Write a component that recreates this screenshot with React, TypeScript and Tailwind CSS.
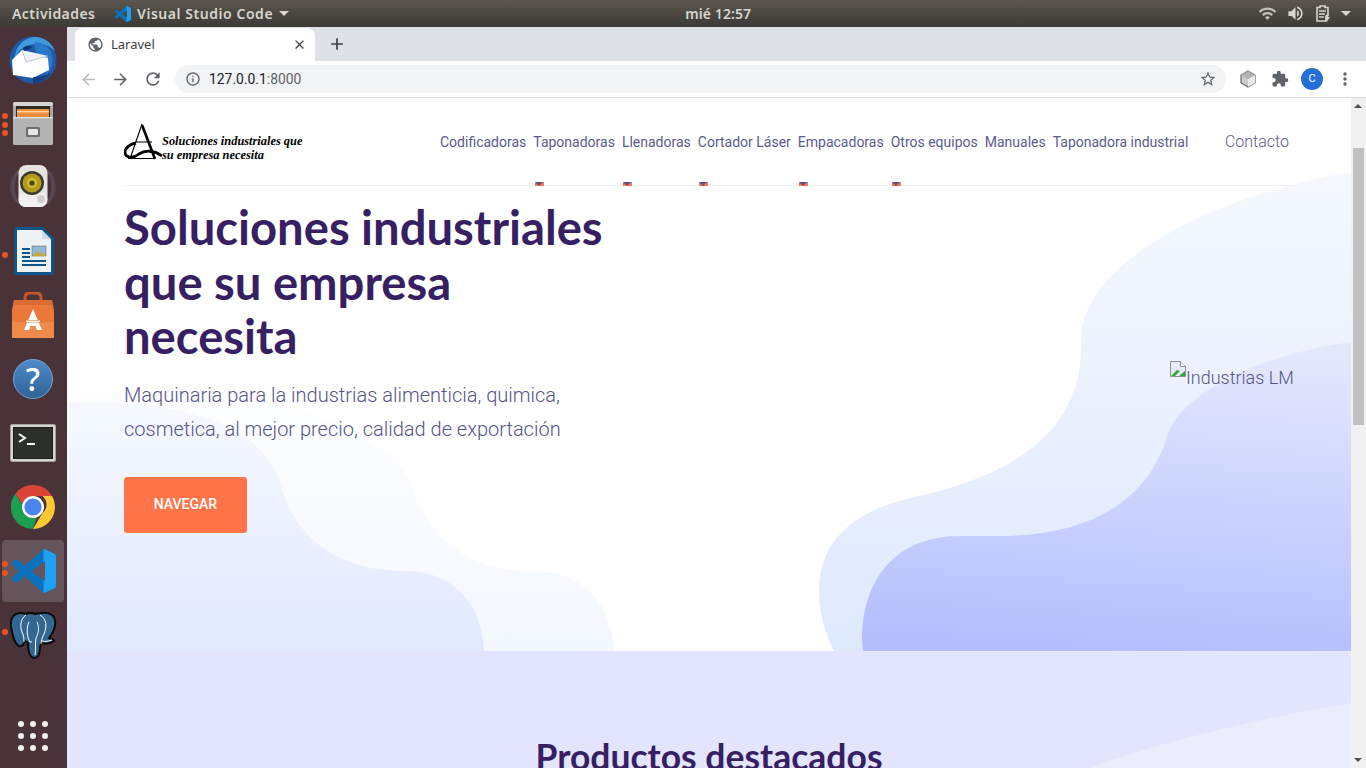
import React from "react";
import { MdArrowBack, MdArrowForward, MdRefresh, MdInfoOutline, MdStarBorder, MdExtension, MdMoreVert, MdClose, MdAdd, MdPublic, MdWifi, MdVolumeUp } from "react-icons/md";

const Dots = ({ ys }: { ys: number[] }) => (
  <>
    {ys.map((y) => (
      <span key={y} className="absolute left-[2px] h-[6px] w-[6px] rounded-full bg-[#e95420]" style={{ top: y }} />
    ))}
  </>
);

const Thunderbird = () => (
  <svg width="48" height="48" viewBox="0 0 48 48" className="-ml-[2px]">
    <circle cx="24" cy="24" r="23.5" fill="#1f5aa8" />
    <path d="M6 24C5 12 14 2 26 1c9 0 17 6 20 14-5-5-12-8-20-7C15 9 8 15 6 24z" fill="#3d9be0" />
    <path d="M26 6c8 0 15 5 17 13 2 8-1 15-6 20 1-7 0-14-6-18-4-3-6-9-5-15z" fill="#2a78c8" />
    <path d="M3 24l10-10 26 8 1 12-16 8-20-3z" fill="#fff" />
    <path d="M13 14l4 12 22-6" fill="#eef1f5" stroke="#b8bec8" strokeWidth="0.8" />
    <path d="M14 12c3-3 7-3 9 0l-8 3z" fill="#12386f" />
    <path d="M24 47c8 0 14-4 18-10-6 3-12 4-18 4z" fill="#143f80" />
  </svg>
);

const Files = () => (
  <svg width="42" height="45" viewBox="0 0 42 45" className="-ml-[1px]">
    <path d="M1 4q0-3 3-3h34q3 0 3 3v38q0 2-3 2H4q-3 0-3-2z" fill="#a9a9a9" />
    <rect x="1" y="1" width="40" height="4" rx="2" fill="#d4d4d4" />
    <rect x="4" y="5" width="34" height="11" fill="#2e2a26" />
    <rect x="5" y="8" width="32" height="8" fill="#ef8f3c" />
    <rect x="5" y="10" width="32" height="1.400" fill="#f7d9a8" />
    <path d="M1 16h40v26q0 2-3 2H4q-3 0-3-2z" fill="#b3b3b3" />
    <rect x="1" y="16" width="40" height="1.400" fill="#e2e2e2" />
    <rect x="14" y="26" width="14" height="10" rx="1.500" fill="#6e6e6e" />
    <rect x="16" y="28" width="10" height="6" rx="1" fill="#e6e6e6" />
  </svg>
);

const Speaker = () => (
  <svg width="48" height="48" viewBox="0 0 48 48" className="-ml-[1px]">
    <path d="M10 8C2 14 2 34 10 40M38 8c8 6 8 26 0 32" fill="none" stroke="#5a4a55" strokeWidth="3" />
    <path d="M6 12C1 18 1 30 6 36M42 12c5 6 5 18 0 24" fill="none" stroke="#54434d" strokeWidth="2" />
    <rect x="9.500" y="2" width="29" height="42" rx="8" fill="#e4e5e0" />
    <rect x="9.500" y="30" width="29" height="14" rx="7" fill="#f0f0ec" />
    <circle cx="23" cy="20" r="12" fill="#3d3a33" />
    <circle cx="23" cy="20" r="9.500" fill="#b29a1d" />
    <circle cx="23" cy="20" r="5" fill="#d6bd2c" />
    <circle cx="23" cy="20" r="2.600" fill="#4a4428" />
    <circle cx="32" cy="36" r="4" fill="#cfd0cc" />
  </svg>
);

const Writer = () => (
  <svg width="40" height="48" viewBox="0 0 40 48">
    <path d="M2 0h27l11 11v35q0 2-2 2H2q-2 0-2-2V2q0-2 2-2z" fill="#0f5587" />
    <path d="M3 3h25l0 9h9v33H3z" fill="#eef2f5" />
    <path d="M28 3l9 9h-9z" fill="#cfdbe4" />
    <rect x="18" y="19" width="14" height="10" fill="#8fb8d8" stroke="#6d6d6d" strokeWidth="0.600" />
    <path d="M19 29l4-5 3 3 2-2 4 4z" fill="#c8a63a" />
    <path d="M8 21h8v2H8zM8 25h8v2H8zM8 29h8v2H8zM8 33h24v2H8zM8 37h24v2H8z" fill="#0f5587" />
  </svg>
);

const Software = () => (
  <svg width="42" height="46" viewBox="0 0 42 46" className="-ml-[1px]">
    <path d="M13 12V6q0-5 5-5h6q5 0 5 5v6" fill="none" stroke="#c9562a" strokeWidth="3" />
    <path d="M2 8h38l2 10v28H0V18z" fill="#e9783a" />
    <path d="M0 30h42v16H0z" fill="#f08a4b" />
    <path d="M2 8h38l1 5H1z" fill="#dc6b30" />
    <path d="M21 17l-9 21h5l1.600-4h4.800l1.600 4h5z" fill="#fff" />
    <rect x="11" y="28" width="20" height="2.600" fill="#e9783a" />
    <rect x="14" y="28.600" width="14" height="1.600" fill="#fff" />
  </svg>
);

const Help = () => (
  <div className="relative -ml-[1px] h-[40px] w-[40px]">
    <svg width="40" height="40" viewBox="0 0 40 40">
      <defs>
        <linearGradient id="hg" x1="0" y1="0" x2="0" y2="1">
          <stop offset="0" stopColor="#4d8bc9" />
          <stop offset="1" stopColor="#2f6297" />
        </linearGradient>
      </defs>
      <circle cx="20" cy="20" r="19.500" fill="url(#hg)" stroke="#6fa2d2" strokeWidth="1" />
    </svg>
    <span className="absolute inset-0 flex items-center justify-center font-['Noto_Sans',sans-serif] text-[32px] font-medium leading-none text-white">?</span>
  </div>
);

const Terminal = () => (
  <svg width="46" height="38" viewBox="0 0 46 38" className="-ml-[1px]">
    <rect x="0.500" y="0.500" width="45" height="37" rx="1.500" fill="#d5d5d3" stroke="#a3a3a0" />
    <rect x="3" y="3" width="40" height="32" fill="#1d1d1d" />
    <rect x="4" y="4" width="38" height="30" fill="#2d2f2d" />
    <path d="M9 10l6 4-6 4" fill="none" stroke="#f4f4f4" strokeWidth="2" />
    <rect x="17" y="19" width="8" height="2" fill="#f4f4f4" />
  </svg>
);

const Chrome = () => (
  <svg width="44" height="44" viewBox="2 2 44 44" className="-ml-[1px]">
    <path d="M24 2a22 22 0 0 1 19 11H24a11 11 0 0 0-10.600 8L6.500 10.500A22 22 0 0 1 24 2z" fill="#db4437" />
    <path d="M43 13a22 22 0 0 1-19 33l9.500-16a11 11 0 0 0 0-17z" fill="#fcc934" />
    <path d="M24 46A22 22 0 0 1 6.500 10.500L15 25a11 11 0 0 0 13 9z" fill="#1e9e50" />
    <circle cx="24" cy="24" r="11" fill="#fff" />
    <circle cx="24" cy="24" r="8.600" fill="#4a85f0" />
  </svg>
);

const VSCode = ({ size = 44 }: { size?: number }) => {
  const d = "M23.15 2.587L18.21.21a1.494 1.494 0 0 0-1.705.29l-9.46 8.63-4.12-3.128a.999.999 0 0 0-1.276.057L.327 7.261A1 1 0 0 0 .326 8.74L3.899 12 .326 15.26a1 1 0 0 0 .001 1.479L1.65 17.94a.999.999 0 0 0 1.276.057l4.12-3.128 9.46 8.63a1.492 1.492 0 0 0 1.704.29l4.942-2.377A1.5 1.5 0 0 0 24 20.06V3.939a1.5 1.5 0 0 0-.85-1.352zm-5.146 14.861L10.826 12l7.178-5.448v10.896z";
  const id = `vsc${size}`;
  return (
    <svg width={size} height={size} viewBox="0 0 24 24">
      <defs>
        <clipPath id={id}>
          <rect x="17.200" y="0" width="7" height="24" />
        </clipPath>
      </defs>
      <path d={d} fill="#0a72bd" />
      <path d={d} fill="#20a0f2" clipPath={`url(#${id})`} />
    </svg>
  );
};

const Elephant = () => (
  <svg width="48" height="48" viewBox="0 0 48 48" className="-ml-[1px]">
    <path d="M12 2C5 2 1 7 2 15C3 24 6 33 10 35C13 36 15 33 16 30L19 32C19 38 20 46 25 47C30 47 31 42 31 36L32 32C36 33 41 33 45 30C46 28 42 28 40 27C44 22 47 15 46 9C45 3 38 1 33 2C30 2 28 3 26 3C22 1 19 2 17 3C15 2 14 2 12 2Z" fill="#336791" stroke="#0b0b0b" strokeWidth="2" />
    <path d="M17 4C11 8 11 16 13 21C15 25 15 28 15 31M31 4C38 8 38 16 35 23C33 27 32 30 32 33M20 11C17 17 18 27 21 31L23 31M28 11C31 17 29 23 27 27C26 32 27 38 26 44M33 30C36 31 40 30 43 29" fill="none" stroke="#fff" strokeWidth="1" />
  </svg>
);

const DockItem = ({ children, dots, h, active }: { children: React.ReactNode; dots?: number[]; h: number; active?: boolean }) => (
  <div className="relative flex items-center justify-center" style={{ height: h }}>
    {active && <div className="absolute left-[2px] top-[1px] h-[62px] w-[62px] rounded-[4px] bg-[#655459]" />}
    <div className="relative flex items-center justify-center">{children}</div>
    {dots && <Dots ys={dots} />}
  </div>
);

const Dock = () => (
  <div className="relative flex w-[67px] shrink-0 flex-col bg-[#4a3338] pt-[1px]">
    <DockItem h={63}><Thunderbird /></DockItem>
    <DockItem h={64} dots={[22, 31, 39]}><Files /></DockItem>
    <DockItem h={64}><Speaker /></DockItem>
    <DockItem h={64} dots={[33]}><Writer /></DockItem>
    <DockItem h={64}><Software /></DockItem>
    <DockItem h={64}><Help /></DockItem>
    <DockItem h={64}><Terminal /></DockItem>
    <DockItem h={64}><Chrome /></DockItem>
    <DockItem h={64} active dots={[22, 31]}><VSCode /></DockItem>
    <DockItem h={64} dots={[26]}><Elephant /></DockItem>
    <div className="absolute bottom-[17px] left-[18px] grid grid-cols-3 gap-x-[6px] gap-y-[6px]">
      {Array.from({ length: 9 }).map((_, i) => (
        <span key={i} className="h-[6px] w-[6px] rounded-full bg-[#f1eeee]" />
      ))}
    </div>
  </div>
);

const TopBar = () => (
  <div className="flex h-[27px] shrink-0 items-center bg-gradient-to-b from-[#5b574e] to-[#3b3a35] pl-3 pr-[15px] font-['Noto_Sans',sans-serif] text-[14px] font-semibold text-[#d8d5ce]">
    <span className="w-[83px] whitespace-nowrap tracking-[0.45px]">Actividades</span>
    <span className="ml-[20px]"><VSCode size={16} /></span>
    <span className="ml-[6px] whitespace-nowrap tracking-[0.55px]">Visual Studio Code</span>
    <span className="ml-[6px] h-0 w-0 border-x-[5px] border-t-[5px] border-x-transparent border-t-[#d8d5ce]" />
    <span className="ml-[396px] w-[65px] whitespace-nowrap text-center tracking-[0.1px]">mié 12:57</span>
    <div className="ml-auto flex items-center">
      <MdWifi size={19} className="text-[#c4c1ba]" />
      <MdVolumeUp size={19} className="ml-[9px]" />
      <svg width="16" height="18" viewBox="0 0 16 18" className="ml-[10px]">
        <path d="M2 2.500h3V1h5v1.500h3V10l-2 1v5H2z" fill="none" stroke="#d8d5ce" strokeWidth="1.600" />
        <path d="M4 6h7M4 9h6M4 12h5" stroke="#d8d5ce" strokeWidth="1.300" />
        <path d="M13 9l-3 5h2l-1 4 4-6h-2l1-3z" fill="#d8d5ce" />
      </svg>
      <span className="ml-[10px] h-0 w-0 border-x-[5px] border-t-[5px] border-x-transparent border-t-[#d8d5ce]" />
    </div>
  </div>
);

const TabStrip = () => (
  <div className="flex h-[34px] shrink-0 items-end bg-[#dee1e6] pl-[8px] font-['Noto_Sans',sans-serif]">
    <div className="flex h-[33px] w-[240px] items-center rounded-t-[8px] bg-white pl-[12px] pr-[8px]">
      <MdPublic size={17} className="text-[#5f6368]" />
      <span className="ml-[7px] text-[13px] text-[#3c4043]">Laravel</span>
      <MdClose size={15} className="ml-auto text-[#3c4043]" />
    </div>
    <MdAdd size={20} className="mb-[7px] ml-[12px] text-[#3c4043]" />
  </div>
);

const Toolbar = () => (
  <div className="flex h-[37px] shrink-0 items-center border-b border-[#dadce0] bg-white pl-[12px] pr-[11px]">
    <MdArrowBack size={19} className="text-[#b9bbbe]" />
    <MdArrowForward size={19} className="ml-[13px] text-[#5f6368]" />
    <MdRefresh size={20} className="ml-[13px] text-[#5f6368]" />
    <div className="ml-[12px] flex h-[28px] w-[1051px] items-center rounded-full bg-[#f1f3f4] pl-[10px] pr-[9px]">
      <MdInfoOutline size={16} className="text-[#5f6368]" />
      <span className="ml-[8px] font-['Roboto',sans-serif] text-[13.9px] text-[#202124]">127.0.0.1<span className="text-[#5f6368]">:8000</span></span>
      <MdStarBorder size={18} className="ml-auto text-[#5f6368]" />
    </div>
    <svg width="18" height="18" viewBox="0 0 18 18" className="ml-[13px]">
      <path d="M9 1l7 4v8l-7 4-7-4V5z" fill="#c9c9c7" stroke="#6a6a6a" strokeWidth="1.200" />
      <path d="M9 9l7-4v8l-7 4z" fill="#e8e8e6" />
      <path d="M2 5l7 4 7-4-7-4z" fill="#b2b2b0" />
    </svg>
    <MdExtension size={18} className="ml-[14px] text-[#5f6368]" />
    <span className="ml-[12px] flex h-[22px] w-[22px] items-center justify-center rounded-full bg-[#2470d8] font-['Roboto',sans-serif] text-[11px] text-white">C</span>
    <MdMoreVert size={20} className="ml-[12px] text-[#5f6368]" />
  </div>
);

const Logo = () => (
  <div className="flex h-[40px] w-[179px] items-center">
    <svg width="38" height="38" viewBox="0 0 38 38" className="shrink-0">
      <path d="M18 1L6 36" fill="none" stroke="#000" strokeWidth="1.100" />
      <path d="M18 2l13 34" fill="none" stroke="#000" strokeWidth="2.600" />
      <path d="M12 19h16M4 35.500h26" fill="none" stroke="#000" strokeWidth="1.100" />
      <path d="M38 33C30 27 21 27 15 31C9 36 1 35 1 29C1 25 6 21 12 20" fill="none" stroke="#000" strokeWidth="2.800" />
    </svg>
    <div className="mt-[12px] whitespace-nowrap font-['Liberation_Serif',serif] text-[12.4px] font-bold italic leading-[14px] text-black">
      Soluciones industriales que<br />su empresa necesita
    </div>
  </div>
);

const navItems = ["Codificadoras", "Taponadoras", "Llenadoras", "Cortador Láser", "Empacadoras", "Otros equipos", "Manuales", "Taponadora industrial"];
const carets = [411, 499, 575, 675, 768];

const Header = () => (
  <header className="relative z-10 mx-[57px] flex h-[88px] items-center border-b border-[#eeeef6] font-['Roboto',sans-serif]">
    <Logo />
    <nav className="ml-[137px] mt-[1px] flex items-center gap-[7px] text-[14px] text-[#5c5b8c]">
      {navItems.map((n) => (
        <span key={n} className="whitespace-nowrap">{n}</span>
      ))}
    </nav>
    <span className="ml-auto mr-[5px] text-[16px] font-light text-[#5c5b8c]">Contacto</span>
    {carets.map((x) => (
      <span key={x} className="absolute bottom-[-1px] h-[4px] w-[9px] bg-[#ff7549]" style={{ left: x }}>
        <span className="absolute left-0 top-0 h-0 w-0 border-x-[4.500px] border-t-[4px] border-x-transparent border-t-[#55548a]" />
      </span>
    ))}
  </header>
);

const Waves = () => (
  <svg className="absolute inset-0 h-full w-full" viewBox="67 98 1284 553" preserveAspectRatio="none">
    <defs>
      <linearGradient id="lo" gradientUnits="userSpaceOnUse" x1="0" y1="350" x2="0" y2="651">
        <stop offset="0" stopColor="#ffffff" />
        <stop offset="1" stopColor="#f3f7fe" />
      </linearGradient>
      <linearGradient id="li" gradientUnits="userSpaceOnUse" x1="0" y1="400" x2="0" y2="651">
        <stop offset="0" stopColor="#f6f9ff" />
        <stop offset="1" stopColor="#e0e9fe" />
      </linearGradient>
      <linearGradient id="r1" gradientUnits="userSpaceOnUse" x1="0" y1="172" x2="0" y2="651">
        <stop offset="0" stopColor="#f5f8fe" />
        <stop offset="1" stopColor="#dfe9fe" />
      </linearGradient>
      <linearGradient id="r2" gradientUnits="userSpaceOnUse" x1="1130" y1="342" x2="1110" y2="651">
        <stop offset="0" stopColor="#e4e8fd" />
        <stop offset="1" stopColor="#b3bffd" />
      </linearGradient>
    </defs>
    <path d="M67 350C130 385 370 395 409 480C425 530 460 571 531 571C590 571 612 610 614 651L67 651Z" fill="url(#lo)" />
    <path d="M67 402C190 398 265 430 280 483C295 540 340 571 405 571C455 571 482 605 484 651L67 651Z" fill="url(#li)" />
    <path d="M1351 172C1215 195 1081 262 1081 340C1084 420 1030 470 923 495C860 508 820 535 819 590C819 615 826 635 834 651L1351 651Z" fill="url(#r1)" />
    <path d="M1351 342C1270 352 1185 390 1168 433C1150 500 1090 536 1000 536L960 536C895 536 862 580 862 640L863 651L1351 651Z" fill="url(#r2)" />
  </svg>
);

const BrokenImage = () => (
  <svg width="16" height="16" viewBox="0 0 16 16" className="absolute left-0 top-0">
    <path d="M0.500 0.500h10l5 5v10h-15z" fill="#e6e9fb" stroke="#8f8f8f" />
    <path d="M10.500 0.500v5h5" fill="#fff" stroke="#8f8f8f" />
    <path d="M1 15l6-6 3 1-5 5z" fill="#35a835" />
    <path d="M9 15l6-5v5z" fill="#35a835" />
    <path d="M3 5c1-2 3-2 4 0z" fill="#fff" />
  </svg>
);

const Hero = () => (
  <section className="relative h-[553px] shrink-0 overflow-hidden bg-white">
    <Waves />
    <Header />
    <div className="relative flex px-[57px] pt-[14px]">
      <div className="w-[500px]">
        <h1 className="font-['Lato',sans-serif] text-[47.2px] font-bold leading-[54.6px] text-[#361f62]">
          Soluciones industriales<br />que su empresa<br />necesita
        </h1>
        <p className="mt-[14px] w-[480px] font-['Roboto',sans-serif] text-[20px] font-light leading-[34px] text-[#55548a]">
          Maquinaria para la industrias alimenticia, quimica, cosmetica, al mejor precio, calidad de exportación
        </p>
        <button className="mt-[31px] h-[56px] w-[123px] rounded-[3px] bg-[#ff7549] font-['Roboto',sans-serif] text-[14px] font-medium text-white">
          NAVEGAR
        </button>
      </div>
      <div className="relative ml-auto mt-[161px] h-[24px] w-[124px] font-['Roboto',sans-serif] text-[18px] font-light leading-[24px] text-[#55548a]">
        <BrokenImage />
        <span className="absolute left-[16px] top-[5px] whitespace-nowrap">Industrias LM</span>
      </div>
    </div>
  </section>
);

const Products = () => (
  <section className="relative flex-1 overflow-hidden bg-[#e3e4fd] pt-[84px]">
    <svg className="absolute inset-0 h-full w-full" viewBox="67 651 1284 117" preserveAspectRatio="none">
      <path d="M1351 703C1250 720 1150 745 1090 768L1351 768Z" fill="#ebedfe" />
    </svg>
    <h2 className="relative text-center font-['Lato',sans-serif] text-[35.5px] font-bold leading-[44px] text-[#361f62]">
      Productos destacados
    </h2>
  </section>
);

const Scrollbar = () => (
  <div className="relative w-[15px] shrink-0 bg-[#f1f1f1]">
    <span className="absolute left-[3px] top-[6px] h-0 w-0 border-x-[4px] border-b-[4px] border-x-transparent border-b-[#505050]" />
    <span className="absolute left-[2px] top-[50px] h-[277px] w-[11px] bg-[#c1c1c1]" />
    <span className="absolute bottom-[6px] left-[3px] h-0 w-0 border-x-[4px] border-t-[4px] border-x-transparent border-t-[#505050]" />
  </div>
);

export default function App() {
  return (
    <div className="flex h-[768px] w-[1366px] flex-col overflow-hidden">
      <TopBar />
      <div className="flex min-h-0 flex-1">
        <Dock />
        <div className="flex min-w-0 flex-1 flex-col">
          <TabStrip />
          <Toolbar />
          <div className="flex min-h-0 flex-1">
            <main className="flex min-w-0 flex-1 flex-col overflow-hidden">
              <Hero />
              <Products />
            </main>
            <Scrollbar />
          </div>
        </div>
      </div>
    </div>
  );
}
